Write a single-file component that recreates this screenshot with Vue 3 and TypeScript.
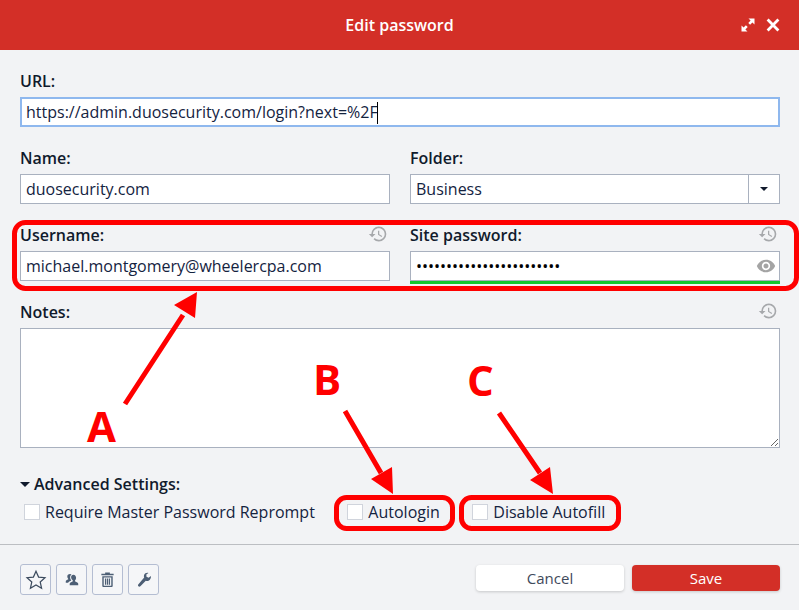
<script setup lang="ts">
import { ref } from 'vue'

const historyPath =
  'M13 3a9 9 0 0 0-9 9H1l3.89 3.89.07.14L9 12H6c0-3.87 3.13-7 7-7s7 3.13 7 7-3.13 7-7 7c-1.93 0-3.68-.79-4.94-2.06l-1.42 1.42A8.954 8.954 0 0 0 13 21a9 9 0 0 0 0-18zm-1 5v5l4.28 2.54.72-1.21-3.5-2.08V8H12z'

const name = ref('duosecurity.com')
const username = ref('michael.montgomery@wheelercpa.com')
const password = ref('x'.repeat(24))
const notes = ref('')

const options = [
  { label: 'Require Master Password Reprompt' },
  { label: 'Autologin' },
  { label: 'Disable Autofill' }
]
</script>

<template>
  <div class="dialog">
    <header class="dialog-header">
      <h1 class="title">Edit password</h1>
      <div class="header-actions">
        <svg width="14" height="14" viewBox="0 0 14 14" fill="#fff">
          <path d="M7.500 0.500h6v6l-2.100-2.100-2.300 2.300-1.800-1.800 2.300-2.300z" />
          <path d="M6.500 13.500h-6v-6l2.100 2.100 2.300-2.300 1.800 1.800-2.300 2.300z" />
        </svg>
        <svg width="14" height="14" viewBox="0 0 14 14" stroke="#fff" stroke-width="2.800" fill="none">
          <path d="M1.600 1.600l10.800 10.800M12.400 1.600L1.600 12.400" />
        </svg>
      </div>
    </header>

    <main class="form">
      <div class="row">
        <div class="col">
          <label class="label">URL:</label>
          <div class="input url-input">https://admin.duosecurity.com/login?next=%2F<span class="caret"></span></div>
        </div>
      </div>

      <div class="row two">
        <div class="col">
          <label class="label">Name:</label>
          <input v-model="name" class="input" />
        </div>
        <div class="col">
          <label class="label">Folder:</label>
          <div class="input select">
            <span class="select-value">Business</span>
            <span class="select-btn"><i class="tri"></i></span>
          </div>
        </div>
      </div>

      <div class="row two">
        <div class="col">
          <div class="label-row">
            <label class="label">Username:</label>
            <svg class="history" width="20" height="20" viewBox="0 0 24 24"><path :d="historyPath" /></svg>
          </div>
          <input v-model="username" class="input" />
        </div>
        <div class="col">
          <div class="label-row">
            <label class="label">Site password:</label>
            <svg class="history" width="20" height="20" viewBox="0 0 24 24"><path :d="historyPath" /></svg>
          </div>
          <div class="password-wrap">
            <input v-model="password" type="password" class="input" />
            <svg class="eye" width="20" height="20" viewBox="0 0 24 24">
              <path d="M12 4.5C7 4.5 2.73 7.61 1 12c1.73 4.39 6 7.5 11 7.5s9.27-3.11 11-7.5c-1.73-4.39-6-7.5-11-7.5zM12 17c-2.76 0-5-2.24-5-5s2.24-5 5-5 5 2.24 5 5-2.24 5-5 5zm0-8c-1.66 0-3 1.34-3 3s1.34 3 3 3 3-1.34 3-3-1.34-3-3-3z" />
            </svg>
          </div>
        </div>
      </div>

      <div class="row">
        <div class="col">
          <div class="label-row">
            <label class="label">Notes:</label>
            <svg class="history" width="20" height="20" viewBox="0 0 24 24"><path :d="historyPath" /></svg>
          </div>
          <textarea v-model="notes" class="input notes"></textarea>
        </div>
      </div>

      <div class="advanced">
        <div class="advanced-title"><i class="tri"></i>Advanced Settings:</div>
        <div class="options">
          <label v-for="opt in options" :key="opt.label" class="option">
            <input type="checkbox" class="check" />
            <span>{{ opt.label }}</span>
          </label>
        </div>
      </div>
    </main>

    <footer class="dialog-footer">
      <div class="tools">
        <button class="tool-btn">
          <svg width="22" height="22" viewBox="0 0 22 22" fill="none" stroke="#3c4b5e" stroke-width="1.200">
            <path d="M11 2.200l2.600 5.900 6.400.6-4.800 4.300 1.400 6.300L11 16l-5.600 3.300 1.400-6.300L2 8.700l6.400-.6z" />
          </svg>
        </button>
        <button class="tool-btn">
          <svg width="16" height="16" viewBox="0 0 18 18" fill="#4d5f75">
            <path d="M10.500 3c2 0 3.100 1.600 3.100 3.400 0 1.300-.5 2.400-1.200 3.100-.3.400-.2.900.3 1.100 1.600.6 3.300 1.300 3.300 2.500V15H6.400v-1.900c0-1.200 1.700-1.900 3.200-2.500.5-.2.6-.7.3-1.100C9.100 8.800 8 7.700 8 6c0-1.700.9-3 2.500-3z" />
            <path d="M6.800 2.200c.7 0 1.300.2 1.700.6C7.400 3.500 6.900 4.700 6.900 6c0 1.400.6 2.700 1.300 3.500-1.500.6-3 1.300-3.500 2.500H2v-1.500c0-.9 1.300-1.500 2.500-2 .4-.2.4-.6.2-.9-.6-.7-1-1.600-1-2.800 0-1.500 1-2.600 3.100-2.600z" />
          </svg>
        </button>
        <button class="tool-btn">
          <svg width="17" height="17" viewBox="0 0 18 18" fill="#4d5f75">
            <path fill-rule="evenodd" d="M6.500 1.500h5V3H15.500v1.500h-13V3H6.500zM3.500 5.500h11V16a1 1 0 0 1-1 1h-9a1 1 0 0 1-1-1zM5 7v8.500h8V7z" />
            <path d="M6.300 8h1.300v6.500H6.300zM8.350 8h1.300v6.500h-1.300zM10.400 8h1.300v6.500h-1.300z" />
          </svg>
        </button>
        <button class="tool-btn">
          <svg width="16" height="16" viewBox="0 0 18 18" fill="#4d5f75">
            <path d="M16.800 4.500l-2.600 2-2.400-1.200-.2-2.400 2.400-1.900c-2-.5-4.200.4-4.900 2.300-.4 1.100-.3 2 .1 2.900L3 13.500c-.9.8-1 1.800-.3 2.500.7.700 1.700.6 2.500-.3L11 9.800c1 .5 2.100.5 3.100.1 1.900-.8 3-3.200 2.700-5.400z" />
          </svg>
        </button>
      </div>
      <div class="actions">
        <button class="btn cancel">Cancel</button>
        <button class="btn save">Save</button>
      </div>
    </footer>

    <!-- annotations drawn on top of the screenshot -->
    <svg class="annotations" width="799" height="610" viewBox="0 0 799 610">
      <g fill="none" stroke="#ff0000" stroke-width="5">
        <rect x="14.500" y="222.500" width="782" height="66" rx="11" />
        <rect x="336.500" y="497.500" width="116" height="31" rx="10" />
        <rect x="461.500" y="497.500" width="157" height="31" rx="10" />
        <path d="M125 404l58-89M345 411l36 62M499 413l41 60" />
      </g>
      <g fill="#ff0000">
        <path d="M197 292l-23 13 21 13zM393 494l-22-15 21-12zM553 494l-23-14 20-13z" />
        <text x="87" y="442" class="mark">A</text>
        <text x="313" y="395" class="mark">B</text>
        <text x="467" y="396" class="mark">C</text>
      </g>
    </svg>
  </div>
</template>

<style>
html,
body {
  margin: 0;
  background: #f2f3f5;
}
</style>

<style scoped>
.dialog {
  position: relative;
  width: 799px;
  height: 610px;
  display: flex;
  flex-direction: column;
  overflow: hidden;
  background: #f2f3f5;
  font-family: "Open Sans", sans-serif;
  font-size: 16px;
  color: #101a2c;
}

.dialog-header {
  position: relative;
  flex-shrink: 0;
  height: 50px;
  display: flex;
  align-items: center;
  justify-content: center;
  background: #d32f27;
  color: #fff;
}

.title {
  margin: 0;
  font-size: 16px;
  font-weight: 600;
}

.header-actions {
  position: absolute;
  right: 19px;
  top: 18px;
  display: flex;
  gap: 11px;
}

.form {
  flex: 1;
  padding: 20px 19px 0 20px;
  display: flex;
  flex-direction: column;
  gap: 20px;
}

.row {
  display: flex;
  gap: 20px;
}

.col {
  flex: 1;
  min-width: 0;
  display: flex;
  flex-direction: column;
  gap: 5px;
}

.label {
  display: block;
  line-height: 22px;
  height: 22px;
  font-weight: 600;
}

.label-row {
  display: flex;
  justify-content: space-between;
  align-items: flex-start;
}

.history {
  fill: #a6a8ab;
  margin: 0 2px 0 0;
}

.input {
  display: block;
  box-sizing: border-box;
  width: 100%;
  height: 30px;
  padding: 0 5px;
  border: 1px solid #a9b1bf;
  border-radius: 0;
  outline: none;
  background: #fff;
  font: inherit;
  line-height: 28px;
  color: #14233f;
}

.url-input {
  border-color: #8fb8ee;
  box-shadow: inset 0 0 0 1px #8fb8ee;
  white-space: nowrap;
}

.caret {
  display: inline-block;
  width: 1px;
  height: 22px;
  margin-left: -1px;
  vertical-align: -6px;
  background: #000;
}

.select {
  display: flex;
  padding: 0;
}

.select-value {
  flex: 1;
  padding-left: 5px;
}

.select-btn {
  width: 30px;
  display: flex;
  align-items: center;
  justify-content: center;
  border-left: 1px solid #a9b1bf;
}

.tri {
  display: inline-block;
  width: 0;
  height: 0;
  border-left: 4px solid transparent;
  border-right: 4px solid transparent;
  border-top: 4px solid #101a2c;
}

.password-wrap {
  position: relative;
  height: 30px;
}

.password-wrap::after {
  content: "";
  position: absolute;
  left: 0;
  right: 0;
  bottom: -3px;
  height: 3px;
  background: #14c72f;
}

.password-wrap .input {
  color: #000;
}

.eye {
  position: absolute;
  right: 4px;
  top: 5px;
  fill: #a4a4a4;
}

.notes {
  height: 120px;
  resize: vertical;
  padding: 4px 5px;
}

.advanced {
  margin-top: 5px;
}

.advanced-title {
  line-height: 22px;
  font-weight: 600;
}

.advanced-title .tri {
  border-left-width: 5.500px;
  border-right-width: 5.500px;
  border-top-width: 5px;
  margin-right: 4px;
  vertical-align: 3px;
}

.options {
  margin-top: 6px;
  padding-left: 4px;
  display: flex;
  gap: 32.500px;
}

.option {
  display: flex;
  align-items: center;
  gap: 5px;
  line-height: 22px;
  color: #14233f;
}

.check {
  appearance: none;
  box-sizing: border-box;
  width: 16px;
  height: 16px;
  margin: 0;
  background: #fff;
  border: 1px solid #d0d4dc;
}

.dialog-footer {
  flex-shrink: 0;
  height: 66px;
  box-sizing: border-box;
  padding: 19px 19px 0 20px;
  border-top: 1px solid #bcbec2;
  display: flex;
  justify-content: space-between;
  align-items: flex-start;
}

.tools {
  display: flex;
  gap: 5px;
}

.tool-btn {
  box-sizing: border-box;
  width: 31px;
  height: 31px;
  padding: 0;
  display: flex;
  align-items: center;
  justify-content: center;
  background: #f5f6f8;
  border: 1px solid #b4bdd2;
  border-radius: 3px;
}

.actions {
  display: flex;
  gap: 8px;
  padding-top: 1px;
}

.btn {
  width: 148px;
  height: 26px;
  padding: 0;
  border: none;
  border-radius: 4px;
  font: inherit;
  font-size: 15px;
  line-height: 26px;
  box-shadow: 0 1px 3px rgba(0, 0, 0, 0.18);
}

.cancel {
  background: #fff;
  color: #3f4a5c;
}

.save {
  background: #d32f27;
  color: #fff;
}

.annotations {
  position: absolute;
  inset: 0;
  pointer-events: none;
}

.mark {
  font-family: "Open Sans", sans-serif;
  font-size: 42px;
  font-weight: 700;
}
</style>
